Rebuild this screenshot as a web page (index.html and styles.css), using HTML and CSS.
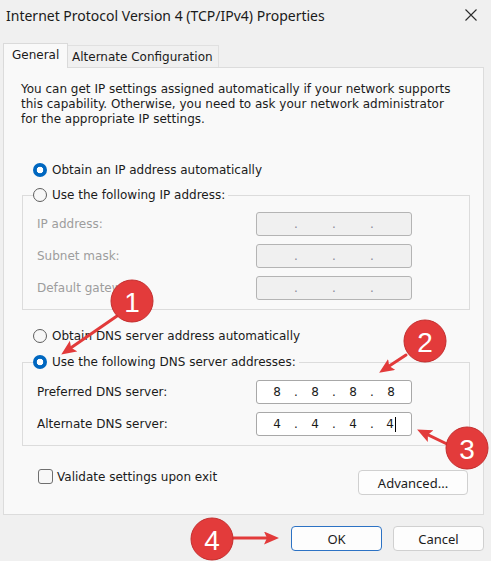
FILE: index.html
```html
<!DOCTYPE html>
<html lang="en">
<head>
<meta charset="utf-8">
<title>Internet Protocol Version 4 (TCP/IPv4) Properties</title>
<link rel="stylesheet" href="styles.css">
</head>
<body>
<div class="window">
  <header class="titlebar">
    <span class="title">Internet Protocol Version 4 (TCP/IPv4) Properties</span>
    <svg class="close" viewBox="0 0 12 12" aria-label="Close"><path d="M0.5 0.5L11.5 11.5M11.5 0.5L0.5 11.5"/></svg>
  </header>

  <div class="tabs">
    <div class="tab active">General</div>
    <div class="tab">Alternate Configuration</div>
  </div>

  <div class="panel">
    <p class="intro">You can get IP settings assigned automatically if your network supports<br>this capability. Otherwise, you need to ask your network administrator<br>for the appropriate IP settings.</p>

    <div class="radio-row first"><span class="radio on"></span>Obtain an IP address automatically</div>

    <fieldset class="group group-ip">
      <legend class="radio-row"><span class="radio"></span>Use the following IP address:</legend>
      <div class="fields disabled">
        <span class="label">IP address:</span>
        <div class="ip"><span class="seg"></span><span class="dot">.</span><span class="seg"></span><span class="dot">.</span><span class="seg"></span><span class="dot">.</span><span class="seg"></span></div>
        <span class="label">Subnet mask:</span>
        <div class="ip"><span class="seg"></span><span class="dot">.</span><span class="seg"></span><span class="dot">.</span><span class="seg"></span><span class="dot">.</span><span class="seg"></span></div>
        <span class="label">Default gateway:</span>
        <div class="ip"><span class="seg"></span><span class="dot">.</span><span class="seg"></span><span class="dot">.</span><span class="seg"></span><span class="dot">.</span><span class="seg"></span></div>
      </div>
    </fieldset>

    <div class="radio-row dns-auto"><span class="radio"></span>Obtain DNS server address automatically</div>

    <fieldset class="group group-dns">
      <legend class="radio-row"><span class="radio on"></span>Use the following DNS server addresses:</legend>
      <div class="fields">
        <span class="label">Preferred DNS server:</span>
        <div class="ip"><span class="seg">8</span><span class="dot">.</span><span class="seg">8</span><span class="dot">.</span><span class="seg">8</span><span class="dot">.</span><span class="seg">8</span></div>
        <span class="label">Alternate DNS server:</span>
        <div class="ip"><span class="seg">4</span><span class="dot">.</span><span class="seg">4</span><span class="dot">.</span><span class="seg">4</span><span class="dot">.</span><span class="seg">4<span class="caret"></span></span></div>
      </div>
    </fieldset>

    <div class="bottom-row">
      <label class="check"><span class="box"></span>Validate settings upon exit</label>
      <button class="btn advanced">Advanced...</button>
    </div>
  </div>

  <div class="actions">
    <button class="btn ok">OK</button>
    <button class="btn">Cancel</button>
  </div>
</div>

<svg class="annotations" width="491" height="561" viewBox="0 0 491 561">
  <defs>
    <marker id="head" markerUnits="userSpaceOnUse" markerWidth="16" markerHeight="14" refX="8" refY="6.5" orient="auto">
      <path d="M0,0 L15,6.5 L0,13 L3,6.5 z" fill="#e23a3a"/>
    </marker>
  </defs>
  <g class="arrows">
    <line x1="117" y1="316" x2="67" y2="350.6" marker-end="url(#head)"/>
    <line x1="406" y1="355" x2="385" y2="368.8" marker-end="url(#head)"/>
    <line x1="447" y1="444" x2="423.4" y2="432.6" marker-end="url(#head)"/>
    <line x1="233" y1="538" x2="272" y2="538" marker-end="url(#head)"/>
  </g>
  <g class="badge"><circle cx="132" cy="301" r="21"/><text x="132" y="302">1</text></g>
  <g class="badge"><circle cx="425" cy="341" r="21"/><text x="425" y="342">2</text></g>
  <g class="badge"><circle cx="467" cy="448" r="21"/><text x="467" y="449">3</text></g>
  <g class="badge"><circle cx="212" cy="539" r="21"/><text x="212" y="540">4</text></g>
</svg>
</body>
</html>
```

FILE: styles.css
```css
* { box-sizing: border-box; }

html, body { margin: 0; padding: 0; }

body {
  width: 491px;
  height: 561px;
  overflow: hidden;
  position: relative;
  background: #f0f0f0;
  font-family: "DejaVu Sans", Verdana, sans-serif;
  font-size: 12px;
  color: #1b1b1b;
}

.window { padding: 0 7px 0 3px; }

.titlebar {
  height: 30px;
  display: flex;
  align-items: center;
  justify-content: space-between;
  padding: 0 7px 0 3px;
}
.title {
  font-family: "Noto Sans", sans-serif;
  font-size: 14px;
  color: #1a1a1a;
}
.close {
  width: 12px;
  height: 12px;
  fill: none;
  stroke: #2b2b2b;
  stroke-width: 1.1;
}

.tabs {
  margin-top: 13px;
  height: 24px;
  display: flex;
  align-items: flex-end;
}
.tab {
  height: 22px;
  display: flex;
  align-items: center;
  padding: 0 4px;
  background: #f0f0f0;
  border: 1px solid #e0e0e0;
  border-bottom: none;
  border-left: none;
  color: #1b1b1b;
  white-space: nowrap;
}
.tab.active {
  width: 65px;
  height: 25px;
  margin-bottom: -1px;
  padding: 0 0 2px 8px;
  background: #f9f9f9;
  border: 1px solid #dadada;
  border-bottom: none;
  position: relative;
  z-index: 1;
}
.tab:not(.active) { width: 151px; padding-top: 1px; }

.panel {
  height: 448px;
  background: #f9f9f9;
  border: 1px solid #dcdcdc;
}

.intro {
  margin: 0;
  padding: 14px 0 0 17px;
  line-height: 15px;
  white-space: nowrap;
}

.radio-row {
  display: flex;
  align-items: center;
  gap: 5px;
  height: 18px;
  white-space: nowrap;
}
.radio-row.first { margin: 34px 0 0 29px; }
.radio-row.dns-auto { margin: 17px 0 0 29px; }

.radio {
  flex: none;
  width: 14px;
  height: 14px;
  border-radius: 50%;
  border: 1px solid #5e5e5e;
  background: #f7f7f7;
}
.radio.on {
  border: none;
  background: radial-gradient(circle, #ffffff 0 3px, #0067c0 3.6px);
}

.group {
  margin: 7px 13px 0 18px;
  padding: 0 10px 9px 10px;
  border: 1px solid #dcdcdc;
  min-width: 0;
}
.group-dns { margin-top: 8px; }
.group legend {
  padding: 0 3px 0 0;
  margin: 0;
}

.fields {
  display: grid;
  grid-template-columns: 219px 156px;
  grid-auto-rows: 24px;
  row-gap: 8px;
  align-items: center;
  padding: 8px 0 0 4px;
  white-space: nowrap;
}
.group-dns .fields { padding-top: 9px; }
.fields.disabled .label { color: #9d9d9d; }

.ip {
  height: 24px;
  display: flex;
  align-items: center;
  padding-left: 5px;
  background: #ffffff;
  border: 1px solid #a8a8a8;
  border-radius: 3px;
  color: #1b1b1b;
}
.fields.disabled .ip {
  background: #f0f0f0;
  border-color: #b4b4b4;
  color: #8a8a9a;
}
.seg {
  width: 30px;
  line-height: 15px;
  display: inline-flex;
  justify-content: center;
  align-items: center;
}
.dot {
  width: 8px;
  text-align: center;
}
.caret {
  display: inline-block;
  width: 1px;
  height: 15px;
  background: #000;
  margin-left: 1px;
}

.bottom-row {
  display: flex;
  justify-content: space-between;
  align-items: flex-start;
  margin-top: 23px;
  padding: 0 15px 0 34px;
}
.check {
  display: flex;
  align-items: center;
  gap: 4px;
  height: 15px;
}
.box {
  width: 15px;
  height: 15px;
  border: 1px solid #6f6f6f;
  border-radius: 3px;
  background: #f7f7f7;
}

.btn {
  font-family: "Noto Sans", sans-serif;
  font-size: 13px;
  color: #1b1b1b;
  height: 25px;
  width: 91px;
  padding: 0;
  background: #fdfdfd;
  border: 1px solid #d0d0d0;
  border-radius: 4px;
}
.btn.advanced { width: 110px; margin-top: 1px; }
.btn.ok { border-color: #2c72c4; }

.actions {
  display: flex;
  justify-content: flex-end;
  gap: 11px;
  margin-top: 11px;
}

.annotations {
  position: absolute;
  left: 0;
  top: 0;
  pointer-events: none;
}
.arrows line {
  stroke: #e23a3a;
  stroke-width: 3;
  stroke-linecap: round;
}
.badge circle {
  fill: #e33b3b;
  stroke: #c42d2d;
  stroke-width: 1;
}
.badge text {
  fill: #ffffff;
  font-family: "Liberation Sans", Arial, sans-serif;
  font-size: 28px;
  text-anchor: middle;
  dominant-baseline: central;
}
```
